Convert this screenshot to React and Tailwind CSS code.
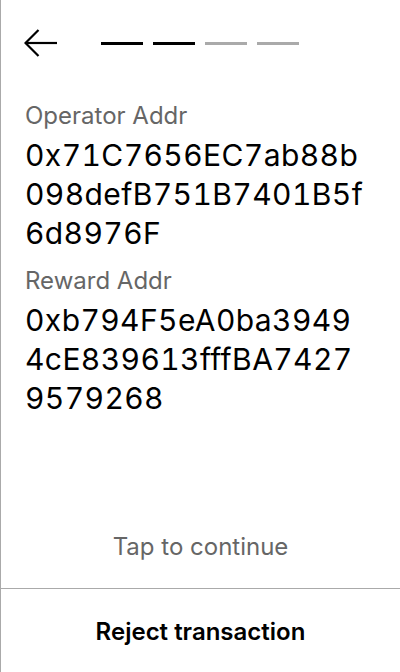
import React from 'react';

const steps = [true, true, false, false];

const Field = ({ label, lines, className = '' }) => (
    <div className={className}>
        <div className="text-[24px] leading-[28px] text-[#666666]">{label}</div>
        <div className="mt-[6px] text-[30px] leading-[39px] tracking-[0.4px] tabular-nums text-black">
            {lines.map((l) => (
                <div key={l}>{l}</div>
            ))}
        </div>
    </div>
);

export default function App() {
    return (
        <div
            className="h-[672px] w-[400px] flex flex-col bg-white border-l border-[#aaaaaa]"
            style={{ fontFamily: 'Inter, "Noto Sans", sans-serif' }}
        >
            {/* header */}
            <div className="flex items-center pt-[28px] pl-[23px]">
                <svg width="36" height="30" viewBox="0 0 36 30" fill="none" stroke="black" strokeWidth="2.2">
                    <path d="M1.5 15 H33" />
                    <path d="M14.5 2 L1.5 15 L14.5 28" />
                </svg>
                <div className="flex gap-[10px] ml-[41px]">
                    {steps.map((done, i) => (
                        <div key={i} className={`w-[42px] h-[3px] ${done ? 'bg-black' : 'bg-[#aaaaaa]'}`} />
                    ))}
                </div>
            </div>

            {/* body */}
            <div className="px-6 mt-[44px]">
                <Field label="Operator Addr" lines={['0x71C7656EC7ab88b', '098defB751B7401B5f', '6d8976F']} />
                <Field
                    className="mt-[14px]"
                    label="Reward Addr"
                    lines={['0xb794F5eA0ba3949', '4cE839613fffBA7427', '9579268']}
                />
            </div>

            <div className="mt-auto pb-[27px] text-center text-[24px] leading-[28px] text-[#666666]">
                Tap to continue
            </div>

            {/* footer */}
            <button className="h-[84px] pt-[3px] border-t border-[#aaaaaa] flex items-center justify-center text-[24px] leading-[28px] font-semibold text-black">
                Reject transaction
            </button>
        </div>
    );
}
